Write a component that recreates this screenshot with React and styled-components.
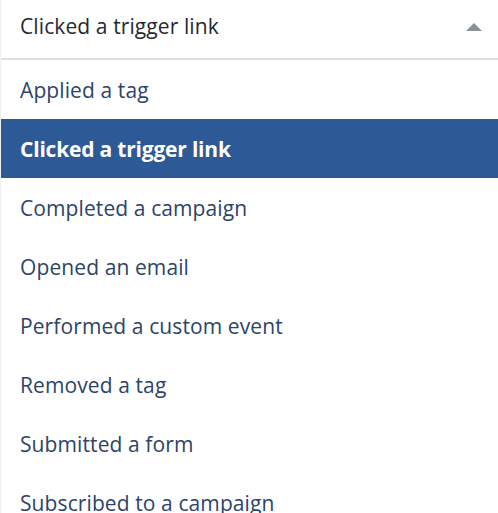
import React, { useState } from "react";
import styled, { createGlobalStyle } from "styled-components";

const GlobalStyle = createGlobalStyle`
  html, body {
    margin: 0;
    padding: 0;
    background: #ffffff;
    font-family: "Open Sans", "Lato", sans-serif;
    overflow: hidden;
  }
`;

const options = [
  "Applied a tag",
  "Clicked a trigger link",
  "Completed a campaign",
  "Opened an email",
  "Performed a custom event",
  "Removed a tag",
  "Submitted a form",
  "Subscribed to a campaign",
];

const Wrapper = styled.div`
  width: 498px;
  height: 513px;
  overflow: hidden;
  border-left: 1px solid #eef0f3;
  box-sizing: border-box;
`;

const Trigger = styled.div`
  height: 60px;
  display: flex;
  align-items: center;
  justify-content: space-between;
  padding: 0 16px 6px 19px;
  border-bottom: 2px solid #dcdfe3;
  box-sizing: border-box;
  color: #25292f;
  font-size: 21px;
  letter-spacing: 0.1px;
`;

const Caret = styled.span`
  width: 0;
  height: 0;
  margin-top: 2px;
  border-left: 8.5px solid transparent;
  border-right: 8.5px solid transparent;
  border-bottom: 8px solid #8a9099;
`;

const List = styled.ul`
  list-style: none;
  margin: 0;
  padding: 0;
`;

const Option = styled.li`
  height: 59px;
  display: flex;
  align-items: center;
  padding: 0 19px;
  font-size: 21px;
  letter-spacing: ${(p) => (p.$active ? "-0.2px" : "0.1px")};
  color: ${(p) => (p.$active ? "#ffffff" : "#2d4468")};
  background: ${(p) => (p.$active ? "#2d5996" : "transparent")};
  font-weight: ${(p) => (p.$active ? 700 : 400)};
  cursor: pointer;
`;

export default function App() {
  const [selected, setSelected] = useState("Clicked a trigger link");
  return (
    <>
      <GlobalStyle />
      <Wrapper>
        <Trigger>
          <span>{selected}</span>
          <Caret />
        </Trigger>
        <List>
          {options.map((o) => (
            <Option key={o} $active={o === selected} onClick={() => setSelected(o)}>
              {o}
            </Option>
          ))}
        </List>
      </Wrapper>
    </>
  );
}
